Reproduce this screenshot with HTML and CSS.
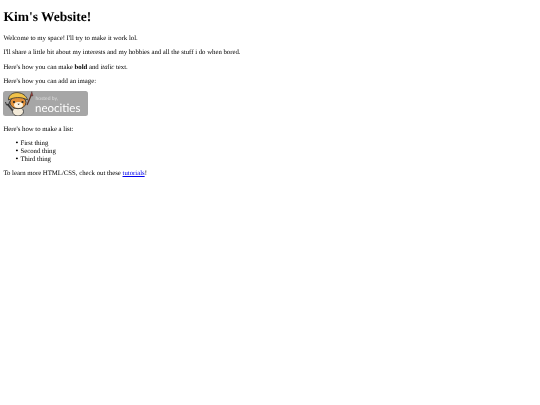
FILE: index.html
```html
<!DOCTYPE html>
<html lang="en">
<head>
    <meta charset="UTF-8">
    <meta name="viewport" content="width=device-width, initial-scale=1.0">
    <title>Kim's Website!</title>
    <link rel="stylesheet" href="styles.css">
</head>
<body>
    <h1>Kim's Website!</h1>
    <p>Welcome to my space! I'll try to make it work lol.</p>
    <p>I'll share a little bit about my interests and my hobbies and all the stuff i do when bored.</p>
    <p>Here's how you can make <strong>bold</strong> and <em>italic</em> text.</p>
    <p>Here's how you can add an image:</p>
    <svg class="badge" viewBox="0 0 85 25" role="img" aria-label="hosted by neocities">
        <rect width="85" height="25" rx="2.5" fill="#a6a6a6"/>
        <!-- brush -->
        <path d="M24 14 L28.500 3.500" stroke="#5a3226" stroke-width="1.300"/>
        <path d="M27.500 4.500 L28.800 0.500 L30 5 Z" fill="#a83a34" stroke="#333" stroke-width=".4"/>
        <!-- wrench arm -->
        <path d="M4.500 13 L10 20" stroke="#333" stroke-width="1.800"/>
        <path d="M2.500 11 L3.500 14 L6 13.500 L6.500 10.500" fill="none" stroke="#333" stroke-width="1"/>
        <!-- cat -->
        <ellipse cx="15" cy="20.500" rx="5.500" ry="4.500" fill="#f3ead8" stroke="#333" stroke-width=".8"/>
        <ellipse cx="15" cy="11.500" rx="8" ry="6.200" fill="#e2913a" stroke="#333" stroke-width=".9"/>
        <path d="M5.500 9 C5 3 12 0.500 17 2 C21 3 24 6 24.500 9 C18 5.500 11 6 5.500 9 Z" fill="#f0c24a" stroke="#333" stroke-width=".8"/>
        <ellipse cx="15.500" cy="14" rx="4.500" ry="3" fill="#fdf3e0"/>
        <circle cx="11" cy="11" r="1.100" fill="#222"/>
        <circle cx="19.500" cy="11" r="1.100" fill="#222"/>
        <path d="M14.500 12.800 L16.800 12.800 L15.600 14 Z" fill="#222"/>
        <text class="badge-small" x="32.500" y="8.500">hosted by,</text>
        <text class="badge-large" x="32" y="21">neocities</text>
    </svg>
    <p>Here's how to make a list:</p>
    <ul>
        <li>First thing</li>
        <li>Second thing</li>
        <li>Third thing</li>
    </ul>
    <p>To learn more HTML/CSS, check out these <a href="#">tutorials</a>!</p>
</body>
</html>
```

FILE: styles.css
```css
body {
    margin: 3.4px;
    background: #fff;
    color: #000;
    font-family: "Liberation Serif", serif;
    font-size: 6.75px;
    line-height: 7.6px;
    text-rendering: geometricPrecision;
    filter: blur(0.15px);
}

h1 {
    margin: 6px 0 10px;
    font-size: 13.5px;
    line-height: 15.5px;
}

p {
    margin: 6.75px 0;
}

ul {
    margin: -1px 0 6.75px;
    padding-left: 17px;
    list-style: none;
}

li {
    line-height: 8px;
}

li::before {
    content: "\2022";
    display: inline-block;
    width: 5px;
    margin-left: -5px;
    font-size: 8px;
    line-height: 0;
}

a {
    color: #00e;
}

.badge {
    display: block;
    width: 85px;
    height: 25px;
    margin: -1px 0 10px;
}

.badge-small {
    font-family: "Lato", sans-serif;
    font-size: 5px;
    fill: #dedede;
}

.badge-large {
    font-family: "Lato", sans-serif;
    font-size: 11.5px;
    fill: #fff;
}
```
